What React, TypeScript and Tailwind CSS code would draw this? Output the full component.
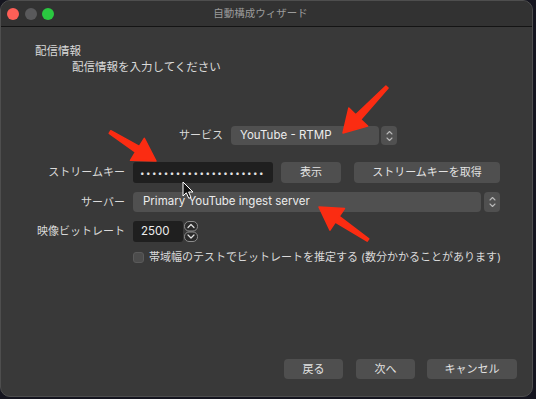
import React from "react";

type Pt = [number, number];

// polygon for an annotation arrow, tail -> tip, tapering shaft
function arrowPoints(tail: Pt, tip: Pt, tailW = 3, baseW = 7, headLen = 22, headW = 26) {
  const dx = tip[0] - tail[0];
  const dy = tip[1] - tail[1];
  const len = Math.hypot(dx, dy);
  const ux = dx / len;
  const uy = dy / len;
  const px = -uy;
  const py = ux;
  const bx = tip[0] - ux * headLen;
  const by = tip[1] - uy * headLen;
  const pts: Pt[] = [
    [tail[0] + (px * tailW) / 2, tail[1] + (py * tailW) / 2],
    [bx + (px * baseW) / 2, by + (py * baseW) / 2],
    [bx + (px * headW) / 2, by + (py * headW) / 2],
    tip,
    [bx - (px * headW) / 2, by - (py * headW) / 2],
    [bx - (px * baseW) / 2, by - (py * baseW) / 2],
    [tail[0] - (px * tailW) / 2, tail[1] - (py * tailW) / 2],
  ];
  return pts.map((p) => p.map((n) => n.toFixed(1)).join(",")).join(" ");
}

const arrows: [Pt, Pt][] = [
  [[387, 87], [343, 133]],
  [[110, 132], [156, 161]],
  [[368, 240], [319, 207]],
];

function ComboStepper() {
  return (
    <div className="w-[16px] h-full rounded-[4px] bg-[#505050] flex items-center justify-center">
      <svg width="7" height="12" viewBox="0 0 7 12" fill="none" stroke="#b8b8b8" strokeWidth="1.1" strokeLinecap="round" strokeLinejoin="round">
        <path d="M1 4 L3.5 1.5 L6 4" />
        <path d="M1 8 L3.5 10.5 L6 8" />
      </svg>
    </div>
  );
}

function SpinArrows() {
  return (
    <svg width="14" height="21" viewBox="0 0 14 21" fill="none">
      <rect x="0.5" y="0.5" width="13" height="9.5" rx="4.5" fill="#2b2b2b" stroke="#8c8c8c" />
      <rect x="0.5" y="11" width="13" height="9.5" rx="4.5" fill="#2b2b2b" stroke="#8c8c8c" />
      <path d="M4 6.5 L7 3.5 L10 6.5" stroke="#e0e0e0" strokeWidth="1.2" strokeLinecap="round" strokeLinejoin="round" />
      <path d="M4 14 L7 17 L10 14" stroke="#e0e0e0" strokeWidth="1.2" strokeLinecap="round" strokeLinejoin="round" />
    </svg>
  );
}

function Button({ label, width }: { label: string; width: string }) {
  return (
    <div className={`${width} h-full rounded-[4px] bg-[#4f4f4f] flex items-center justify-center text-[11px] text-[#e2e2e2]`}>
      {label}
    </div>
  );
}

export default function App() {
  return (
    <div className="relative w-[536px] h-[399px] bg-[#15151f] overflow-hidden font-['Inter','Noto_Sans_CJK_JP',sans-serif]">
      <div className="w-[533px] h-[397px] rounded-[10px] border border-[#4e4e4e] bg-[#393939] flex flex-col overflow-hidden">
        {/* Title bar */}
        <div className="relative h-[26px] shrink-0 bg-[#323232] border-b border-[#141414] flex items-center">
          <div className="flex items-center gap-[5.5px] pl-[6px]">
            <span className="w-3 h-3 rounded-full bg-[#fe5f57]" />
            <span className="w-3 h-3 rounded-full bg-[#59595b]" />
            <span className="w-3 h-3 rounded-full bg-[#2ac840]" />
          </div>
          <div className="absolute inset-0 flex items-center justify-center text-[10.5px] text-[#9b9b9b] pr-[12px]">
            自動構成ウィザード
          </div>
        </div>

        {/* Body */}
        <div className="flex-1 flex flex-col pt-[16px] text-[11px] text-[#dadada]">
          <div className="pl-[34px] text-[11.5px] leading-[16px]">配信情報</div>
          <div className="pl-[71px] text-[11.5px] leading-[16px]">配信情報を入力してください</div>

          <div className="pl-[20px] flex flex-col mt-[51px]">
            {/* Service */}
            <div className="flex items-center h-[19px]">
              <span className="w-[202px] text-right">サービス</span>
              <div className="ml-2 w-[148px] h-full rounded-[4px] bg-[#505050] flex items-center pl-[9px] text-[11.5px] text-[#ececec]">
                YouTube - RTMP
              </div>
              <div className="ml-[2px] h-full">
                <ComboStepper />
              </div>
            </div>

            {/* Stream key */}
            <div className="flex items-center h-[21px] mt-[17px]">
              <span className="w-[104px] text-right">ストリームキー</span>
              <div className="ml-2 w-[140px] h-full rounded-[3px] bg-[#1f1f1f] flex items-center pl-[7px] text-[8px] tracking-[1.45px] text-[#e4e4e4] overflow-hidden whitespace-nowrap">
                •••••••••••••••••••••
              </div>
              <div className="ml-2 h-full">
                <Button label="表示" width="w-[60px]" />
              </div>
              <div className="ml-[13px] h-full">
                <Button label="ストリームキーを取得" width="w-[146px]" />
              </div>
            </div>

            {/* Server */}
            <div className="flex items-center h-[20px] mt-[9px]">
              <span className="w-[104px] text-right">サーバー</span>
              <div className="ml-2 w-[348px] h-full rounded-[4px] bg-[#505050] flex items-center pl-[10px] text-[11.5px] text-[#ececec]">
                Primary YouTube ingest server
              </div>
              <div className="ml-[3px] h-full">
                <ComboStepper />
              </div>
            </div>

            {/* Bitrate */}
            <div className="flex items-center h-[21px] mt-[9px]">
              <span className="w-[104px] text-right">映像ビットレート</span>
              <div className="ml-2 w-[50px] h-full rounded-[3px] bg-[#1f1f1f] flex items-center pl-[8px] text-[11.5px] text-[#ececec]">
                2500
              </div>
              <div className="ml-[1px] flex items-center">
                <SpinArrows />
              </div>
            </div>

            {/* Bandwidth test */}
            <div className="flex items-center h-[12px] mt-[9px]">
              <span className="w-[104px]" />
              <span className="ml-2 w-[11px] h-[11px] rounded-[3px] bg-[#4c4c4c] border border-[#5a5a5a]" />
              <span className="ml-[5px] whitespace-nowrap">帯域幅のテストでビットレートを推定する (数分かかることがあります)</span>
            </div>
          </div>

          {/* Footer buttons */}
          <div className="mt-auto flex justify-end items-center h-[20px] mb-[17px] pr-[15px]">
            <Button label="戻る" width="w-[59px]" />
            <div className="ml-[13px] h-full">
              <Button label="次へ" width="w-[59px]" />
            </div>
            <div className="ml-[12px] h-full">
              <Button label="キャンセル" width="w-[90px]" />
            </div>
          </div>
        </div>
      </div>

      {/* Annotation arrows */}
      <svg className="absolute inset-0 pointer-events-none" width="536" height="399">
        {arrows.map(([a, b], i) => (
          <polygon key={i} points={arrowPoints(a, b)} fill="#fb2c12" stroke="#fb2c12" strokeWidth="1.5" strokeLinejoin="round" />
        ))}
      </svg>

      {/* Mouse pointer */}
      <svg className="absolute left-[182px] top-[181px] pointer-events-none" width="13" height="19" viewBox="0 0 13 19">
        <path d="M1 1 L1 15 L4.3 11.8 L6.8 17.3 L9 16.3 L6.6 11 L11 11 Z" fill="#111" stroke="#fff" strokeWidth="1" strokeLinejoin="round" />
      </svg>
    </div>
  );
}
